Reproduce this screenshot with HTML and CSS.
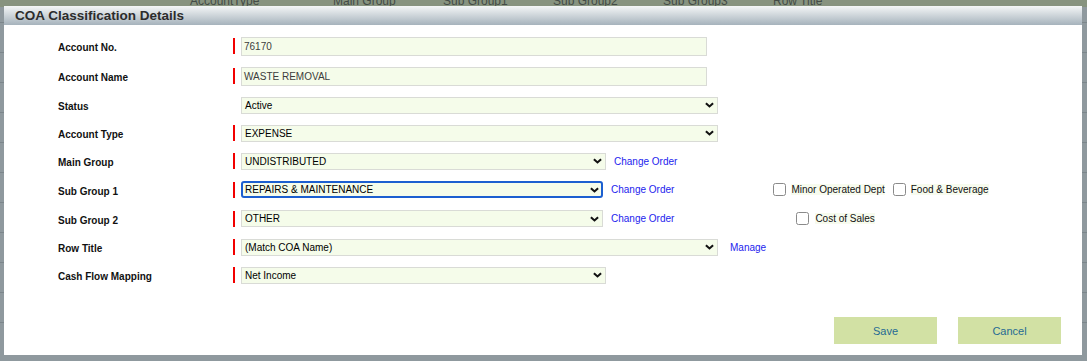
FILE: index.html
```html
<!DOCTYPE html>
<html>
<head>
<meta charset="utf-8">
<title>COA Classification Details</title>
<link rel="stylesheet" href="styles.css">
</head>
<body>
<div class="page">
  <div class="bg-head">
    <span class="c1">AccountType</span>
    <span class="c2">Main Group</span>
    <span class="c3">Sub Group1</span>
    <span class="c3">Sub Group2</span>
    <span class="c3">Sub Group3</span>
    <span class="c3">Row Title</span>
  </div>
  <div class="bg-rows">
    <div class="bg-row"></div><div class="bg-row"></div><div class="bg-row"></div>
    <div class="bg-row"></div><div class="bg-row"></div><div class="bg-row"></div>
    <div class="bg-row"></div><div class="bg-row"></div><div class="bg-row"></div>
    <div class="bg-row"></div><div class="bg-row"></div>
  </div>
</div>

<div class="dialog">
  <div class="titlebar">COA Classification Details</div>
  <div class="form">
    <div class="row h30">
      <span class="lbl">Account No.</span><span class="req"></span>
      <div class="field text">76170</div>
    </div>
    <div class="row h30">
      <span class="lbl">Account Name</span><span class="req"></span>
      <div class="field text">WASTE REMOVAL</div>
    </div>
    <div class="row h28">
      <span class="lbl">Status</span><span class="req none"></span>
      <div class="field select w-long"><span>Active</span><svg class="chev" viewBox="0 0 10 6"><path d="M1 1 L5 4.6 L9 1"/></svg></div>
    </div>
    <div class="row h28">
      <span class="lbl">Account Type</span><span class="req"></span>
      <div class="field select w-long"><span>EXPENSE</span><svg class="chev" viewBox="0 0 10 6"><path d="M1 1 L5 4.6 L9 1"/></svg></div>
    </div>
    <div class="row h28">
      <span class="lbl">Main Group</span><span class="req"></span>
      <div class="field select w-mid"><span>UNDISTRIBUTED</span><svg class="chev" viewBox="0 0 10 6"><path d="M1 1 L5 4.6 L9 1"/></svg></div>
      <a class="link" href="#">Change Order</a>
    </div>
    <div class="row h29">
      <span class="lbl">Sub Group 1</span><span class="req"></span>
      <div class="field select w-sub focus"><span>REPAIRS &amp; MAINTENANCE</span><svg class="chev" viewBox="0 0 10 6"><path d="M1 1 L5 4.6 L9 1"/></svg></div>
      <a class="link" href="#">Change Order</a>
      <span class="chk chk-minor"></span><span class="chk-lbl">Minor Operated Dept</span>
      <span class="chk chk-food"></span><span class="chk-lbl">Food &amp; Beverage</span>
    </div>
    <div class="row h29">
      <span class="lbl">Sub Group 2</span><span class="req"></span>
      <div class="field select w-sub"><span>OTHER</span><svg class="chev" viewBox="0 0 10 6"><path d="M1 1 L5 4.6 L9 1"/></svg></div>
      <a class="link" href="#">Change Order</a>
      <span class="chk chk-cost"></span><span class="chk-lbl wide">Cost of Sales</span>
    </div>
    <div class="row h28">
      <span class="lbl">Row Title</span><span class="req"></span>
      <div class="field select w-long"><span>(Match COA Name)</span><svg class="chev" viewBox="0 0 10 6"><path d="M1 1 L5 4.6 L9 1"/></svg></div>
      <a class="link manage" href="#">Manage</a>
    </div>
    <div class="row h28">
      <span class="lbl">Cash Flow Mapping</span><span class="req"></span>
      <div class="field select w-mid"><span>Net Income</span><svg class="chev" viewBox="0 0 10 6"><path d="M1 1 L5 4.6 L9 1"/></svg></div>
    </div>
  </div>
  <div class="actions">
    <button class="btn">Save</button>
    <button class="btn">Cancel</button>
  </div>
</div>
</body>
</html>
```
FILE: styles.css
```css
html, body {
  margin: 0;
  padding: 0;
}
body {
  width: 1087px;
  height: 361px;
  overflow: hidden;
  position: relative;
  background: #8f999e;
  font-family: "Liberation Sans", Arial, Helvetica, sans-serif;
}

/* background page (dimmed) */
.page {
  width: 100%;
  height: 100%;
}
.bg-head {
  height: 7px;
  background: #87937f;
  overflow: hidden;
  display: flex;
  padding-left: 190px;
}
.bg-head span {
  font-size: 12px;
  line-height: 12px;
  margin-top: -5px;
  color: #434b46;
  white-space: nowrap;
}
.bg-head .c1 { width: 143px; }
.bg-head .c2 { width: 110px; }
.bg-head .c3 { width: 110px; }
.bg-rows {
  margin-top: 15px;
}
.bg-row {
  height: 29px;
  border-top: 1px solid #7c868b;
}

/* dialog */
.dialog {
  position: absolute;
  left: 4px;
  top: 6px;
  width: 1078px;
  height: 349px;
  background: #fff;
}
.titlebar {
  height: 19px;
  line-height: 20px;
  padding-left: 11px;
  background: linear-gradient(#f4f6f7, #a6b3bc);
  font-size: 13.5px;
  font-weight: bold;
  color: #2c2c2c;
}
.form {
  padding: 6px 0 0 54px;
}
.row {
  display: flex;
  align-items: center;
}
.h30 { height: 30px; }
.h29 { height: 29px; }
.h28 { height: 28px; }

.lbl {
  width: 175px;
  flex: none;
  padding-top: 3px;
  font-size: 10px;
  font-weight: bold;
  color: #111;
}
.req {
  flex: none;
  width: 2px;
  height: 16px;
  margin-right: 6px;
  background: #f20000;
}
.req.none {
  background: transparent;
}
.field {
  box-sizing: border-box;
  flex: none;
  display: flex;
  align-items: center;
  background: #f5fcea;
  border: 1px solid #d9dbd6;
  font-size: 10px;
  white-space: nowrap;
}
.text {
  width: 466px;
  height: 19px;
  padding-left: 2px;
  color: #3c3c3c;
}
.select {
  height: 17px;
  padding: 0 3px 0 3px;
  justify-content: space-between;
  color: #000;
}
.w-long { width: 477px; }
.w-mid { width: 365px; }
.w-sub { width: 362px; }
.focus {
  border: 2px solid #1c5fd0;
  border-radius: 3px;
  padding: 0 2px 0 2px;
}
.chev {
  width: 9px;
  height: 6px;
  flex: none;
}
.chev path {
  fill: none;
  stroke: #111;
  stroke-width: 2.3;
}
.link {
  margin-left: 8px;
  font-size: 10px;
  color: #2323ee;
  text-decoration: none;
  white-space: nowrap;
}
.link.manage {
  margin-left: 12px;
}
.chk {
  flex: none;
  box-sizing: border-box;
  width: 13px;
  height: 13px;
  border: 1px solid #8a8a8a;
  border-radius: 2.5px;
  background: #fff;
}
.chk-minor { margin-left: 99px; }
.chk-food { margin-left: 8px; }
.chk-cost { margin-left: 122px; }
.chk-lbl {
  margin-left: 5px;
  font-size: 10px;
  color: #111;
  background: #f7fbee;
  white-space: nowrap;
}
.chk-lbl.wide {
  margin-left: 6px;
}
.actions {
  display: flex;
  justify-content: flex-end;
  gap: 21px;
  padding-right: 21px;
  margin-top: 28px;
}
.btn {
  width: 103px;
  height: 27px;
  border: none;
  background: #d2e1a4;
  color: #256a93;
  font-family: "Liberation Sans", Arial, Helvetica, sans-serif;
  font-size: 11px;
  padding: 0;
}
```
